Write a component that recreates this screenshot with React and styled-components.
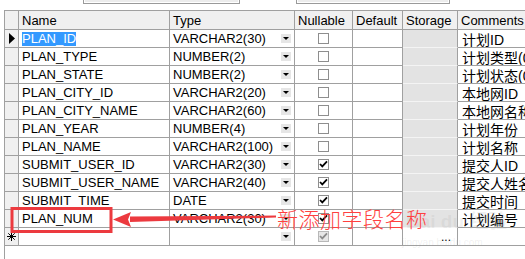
import React from "react";
import styled, { createGlobalStyle } from "styled-components";

const GlobalStyle = createGlobalStyle`
  html, body {
    margin: 0;
    padding: 0;
    background: #ffffff;
  }
  body {
    font-family: "Liberation Sans", Arial, sans-serif;
  }
`;

const Page = styled.div`
  position: relative;
  width: 525px;
  height: 259px;
  overflow: hidden;
  background: #ffffff;
`;

const TopBar = styled.div`
  height: 10px;
  display: flex;
  padding-left: 83px;
  gap: 56px;
`;

const TopBox = styled.div`
  width: ${p => p.$w}px;
  height: 4px;
  box-sizing: border-box;
  background: #ececec;
  border: 1px solid #9a9a9a;
  border-top: none;
  box-shadow: inset 1px 0 0 #ffffff, inset -1px -1px 0 #ffffff;
`;

const Grid = styled.div`
  margin-left: 4px;
  height: 249px;
  border-left: 1px solid #a0a0a0;
  border-top: 1px solid #a0a0a0;
  box-sizing: border-box;
  font-size: 13px;
  color: #000;
`;

const Row = styled.div`
  display: grid;
  grid-template-columns: 14px 151px 125px 58px 50px 55px 1fr;
  height: ${p => (p.$header ? 19 : 18)}px;
`;

const Cell = styled.div`
  box-sizing: border-box;
  border-right: 1px solid #a0a0a0;
  border-bottom: 1px solid #a0a0a0;
  padding: 0 3px;
  display: flex;
  align-items: center;
  white-space: nowrap;
  overflow: hidden;
  background: ${p => p.$bg || "#ffffff"};
`;

const HeadCell = styled(Cell)`
  background: #f0f0f0;
  padding-top: 1px;
`;

const IndicatorCell = styled(Cell)`
  background: #f0f0f0;
  padding: 0;
  justify-content: center;
`;

const TypeCell = styled(Cell)`
  justify-content: space-between;
  padding-right: 3px;
`;

const CenterCell = styled(Cell)`
  justify-content: center;
  padding: 0;
`;

const StorageCell = styled(Cell)`
  background: ${p => (p.$new ? "#ffffff" : "#e3e3e3")};
  border-bottom-color: ${p => (p.$new ? "#a0a0a0" : "#f4f4f4")};
  justify-content: flex-end;
  padding-right: 6px;
  font-size: 12px;
`;

const CommentCell = styled(Cell)`
  font-family: "Liberation Sans", "Noto Sans CJK SC", sans-serif;
  font-size: 14px;
  padding-left: 4px;
  border-right: none;
`;

const Selected = styled.span`
  background: #3399ff;
  color: #ffffff;
  line-height: 14px;
`;

const DropButton = styled.div`
  width: 10px;
  height: 9px;
  background: #e6e6e6;
  display: flex;
  align-items: center;
  justify-content: center;
  &::after {
    content: "";
    border-left: 3px solid transparent;
    border-right: 3px solid transparent;
    border-top: 3px solid #000;
  }
`;

const Box = styled.div`
  width: 11px;
  height: 11px;
  box-sizing: border-box;
  border: 1px solid ${p => (p.$disabled ? "#b8b8b8" : "#8e8e8e")};
  background: ${p => (p.$disabled ? "#e6e6e6" : "#ffffff")};
  display: flex;
  align-items: center;
  justify-content: center;
`;

const Annotation = styled.svg`
  position: absolute;
  left: 0;
  top: 0;
  pointer-events: none;
`;

const RedNote = styled.div`
  position: absolute;
  left: 277px;
  top: 204px;
  font-family: "Noto Sans CJK SC", sans-serif;
  font-size: 21px;
  font-weight: 300;
  line-height: 28px;
  color: #ff4040;
  letter-spacing: 0.5px;
  pointer-events: none;
  white-space: nowrap;
`;

const Watermark = styled.div`
  position: absolute;
  left: ${p => p.$x}px;
  top: ${p => p.$y}px;
  font-family: "Liberation Sans", "Noto Sans CJK SC", sans-serif;
  font-size: ${p => p.$size}px;
  font-weight: ${p => p.$weight || 400};
  color: rgba(150, 150, 150, 0.14);
  pointer-events: none;
  white-space: nowrap;
`;

const rows = [
  ["PLAN_ID", "VARCHAR2(30)", false, "计划ID"],
  ["PLAN_TYPE", "NUMBER(2)", false, "计划类型(0"],
  ["PLAN_STATE", "NUMBER(2)", false, "计划状态(0"],
  ["PLAN_CITY_ID", "VARCHAR2(20)", false, "本地网ID"],
  ["PLAN_CITY_NAME", "VARCHAR2(60)", false, "本地网名称"],
  ["PLAN_YEAR", "NUMBER(4)", false, "计划年份"],
  ["PLAN_NAME", "VARCHAR2(100)", false, "计划名称"],
  ["SUBMIT_USER_ID", "VARCHAR2(30)", true, "提交人ID"],
  ["SUBMIT_USER_NAME", "VARCHAR2(40)", true, "提交人姓名"],
  ["SUBMIT_TIME", "DATE", true, "提交时间"],
  ["PLAN_NUM", "VARCHAR2(30)", true, "计划编号"],
];

function Check({ checked, disabled }) {
  return (
    <Box $disabled={disabled}>
      {checked && (
        <svg width="9" height="9" viewBox="0 0 9 9">
          <path
            d="M1 4 L3.3 6.4 L8 1.4"
            fill="none"
            stroke={disabled ? "#8a8a8a" : "#000"}
            strokeWidth="1.8"
          />
        </svg>
      )}
    </Box>
  );
}

function Pointer() {
  return (
    <svg width="6" height="11" viewBox="0 0 6 11">
      <path d="M0 0 L6 5.5 L0 11 Z" fill="#000" />
    </svg>
  );
}

function Star() {
  return (
    <svg width="9" height="9" viewBox="0 0 9 9">
      <g stroke="#000" strokeWidth="1">
        <line x1="4.5" y1="0" x2="4.5" y2="9" />
        <line x1="0" y1="4.5" x2="9" y2="4.5" />
        <line x1="1.3" y1="1.3" x2="7.7" y2="7.7" />
        <line x1="7.7" y1="1.3" x2="1.3" y2="7.7" />
      </g>
    </svg>
  );
}

export default function App() {
  return (
    <Page>
      <GlobalStyle />
      <TopBar>
        <TopBox $w={157} />
        <TopBox $w={154} />
      </TopBar>
      <Grid>
        <Row $header>
          <HeadCell as={IndicatorCell} />
          <HeadCell>Name</HeadCell>
          <HeadCell>Type</HeadCell>
          <HeadCell>Nullable</HeadCell>
          <HeadCell>Default</HeadCell>
          <HeadCell>Storage</HeadCell>
          <HeadCell style={{ borderRight: "none" }}>Comments</HeadCell>
        </Row>
        {rows.map(([name, type, nullable, comment], i) => (
          <Row key={name}>
            <IndicatorCell>{i === 0 && <Pointer />}</IndicatorCell>
            <Cell>{i === 0 ? <Selected>{name}</Selected> : name}</Cell>
            <TypeCell>
              <span>{type}</span>
              <DropButton />
            </TypeCell>
            <CenterCell>
              <Check checked={nullable} />
            </CenterCell>
            <Cell />
            <StorageCell />
            <CommentCell>{comment}</CommentCell>
          </Row>
        ))}
        <Row>
          <IndicatorCell>
            <Star />
          </IndicatorCell>
          <Cell />
          <TypeCell>
            <span />
            <DropButton />
          </TypeCell>
          <CenterCell>
            <Check checked disabled />
          </CenterCell>
          <Cell />
          <StorageCell $new>...</StorageCell>
          <CommentCell />
        </Row>
      </Grid>

      <Watermark $x={406} $y={206} $size={19} $weight={700}>
        Bai du 经验
      </Watermark>
      <Watermark $x={402} $y={237} $size={10}>
        jingyan.baidu.com
      </Watermark>

      <Annotation width="525" height="259" viewBox="0 0 525 259">
        <rect
          x="12"
          y="208.5"
          width="99"
          height="23"
          fill="none"
          stroke="#ec3a3f"
          strokeWidth="3"
        />
        <path
          d="M130 216.5 L276 215.5 L276 217.5 L130 222 Z"
          fill="#ec3a3f"
        />
        <path d="M113 219.5 L131 212 L128 219.5 L131 227 Z" fill="#ec3a3f" />
      </Annotation>
      <RedNote>新添加字段名称</RedNote>
    </Page>
  );
}
